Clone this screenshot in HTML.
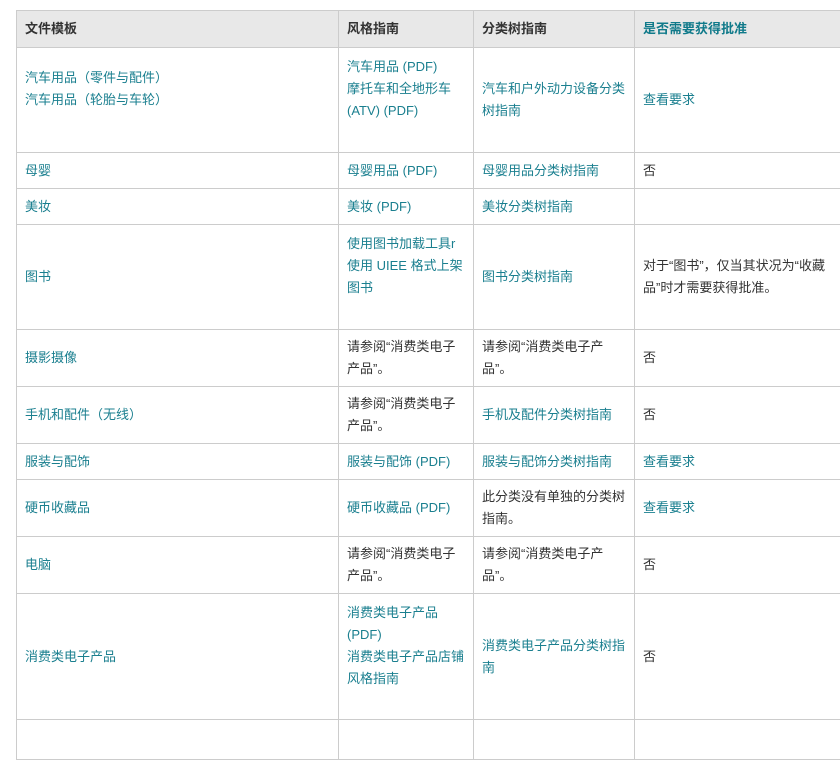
<!DOCTYPE html>
<html><head><meta charset="utf-8"><style>
html,body{margin:0;padding:0;background:#fff;width:840px;height:721px;overflow:hidden}
body{font-family:"Liberation Sans","Noto Sans CJK SC",sans-serif;font-size:13px;color:#333}
table{position:absolute;left:16px;top:10px;border-collapse:collapse;table-layout:fixed;width:840px}
td,th{border:1px solid #ccc;padding:0 8px;line-height:22px;vertical-align:middle;text-align:left;box-sizing:border-box}
th{background:#e8e8e8;font-weight:bold;color:#333;height:37px}
a{color:#1a7f8f;text-decoration:none}
th.t{color:#107a8a}
</style></head><body>
<table>
<colgroup><col style="width:322px"><col style="width:135px"><col style="width:161px"><col style="width:222px"></colgroup>
<tr><th>文件模板</th><th>风格指南</th><th>分类树指南</th><th class="t">是否需要获得批准</th></tr>
<tr style="height:105px"><td><a>汽车用品（零件与配件）</a><br><a>汽车用品（轮胎与车轮）</a><br>&nbsp;</td><td><a>汽车用品 (PDF)</a><br><a>摩托车和全地形车 (ATV) (PDF)</a><br>&nbsp;</td><td><a>汽车和户外动力设备分类树指南</a></td><td><a>查看要求</a></td></tr>
<tr style="height:36px"><td><a>母婴</a></td><td><a>母婴用品 (PDF)</a></td><td><a>母婴用品分类树指南</a></td><td>否</td></tr>
<tr style="height:36px"><td><a>美妆</a></td><td><a>美妆 (PDF)</a></td><td><a>美妆分类树指南</a></td><td></td></tr>
<tr style="height:105px"><td><a>图书</a></td><td><a>使用图书加载工具r</a><br><a>使用 UIEE 格式上架图书</a><br>&nbsp;</td><td><a>图书分类树指南</a></td><td>对于“图书”，仅当其状况为“收藏品”时才需要获得批准。</td></tr>
<tr style="height:57px"><td><a>摄影摄像</a></td><td>请参阅“消费类电子产品”。</td><td>请参阅“消费类电子产品”。</td><td>否</td></tr>
<tr style="height:57px"><td><a>手机和配件（无线）</a></td><td>请参阅“消费类电子产品”。</td><td><a>手机及配件分类树指南</a></td><td>否</td></tr>
<tr style="height:36px"><td><a>服装与配饰</a></td><td><a>服装与配饰 (PDF)</a></td><td><a>服装与配饰分类树指南</a></td><td><a>查看要求</a></td></tr>
<tr style="height:57px"><td><a>硬币收藏品</a></td><td><a>硬币收藏品 (PDF)</a></td><td>此分类没有单独的分类树指南。</td><td><a>查看要求</a></td></tr>
<tr style="height:57px"><td><a>电脑</a></td><td>请参阅“消费类电子产品”。</td><td>请参阅“消费类电子产品”。</td><td>否</td></tr>
<tr style="height:126px"><td><a>消费类电子产品</a></td><td><a>消费类电子产品 (PDF)</a><br><a>消费类电子产品店铺风格指南</a><br>&nbsp;</td><td><a>消费类电子产品分类树指南</a></td><td>否</td></tr>
<tr style="height:40px"><td></td><td></td><td></td><td></td></tr>
</table>
</body></html>
